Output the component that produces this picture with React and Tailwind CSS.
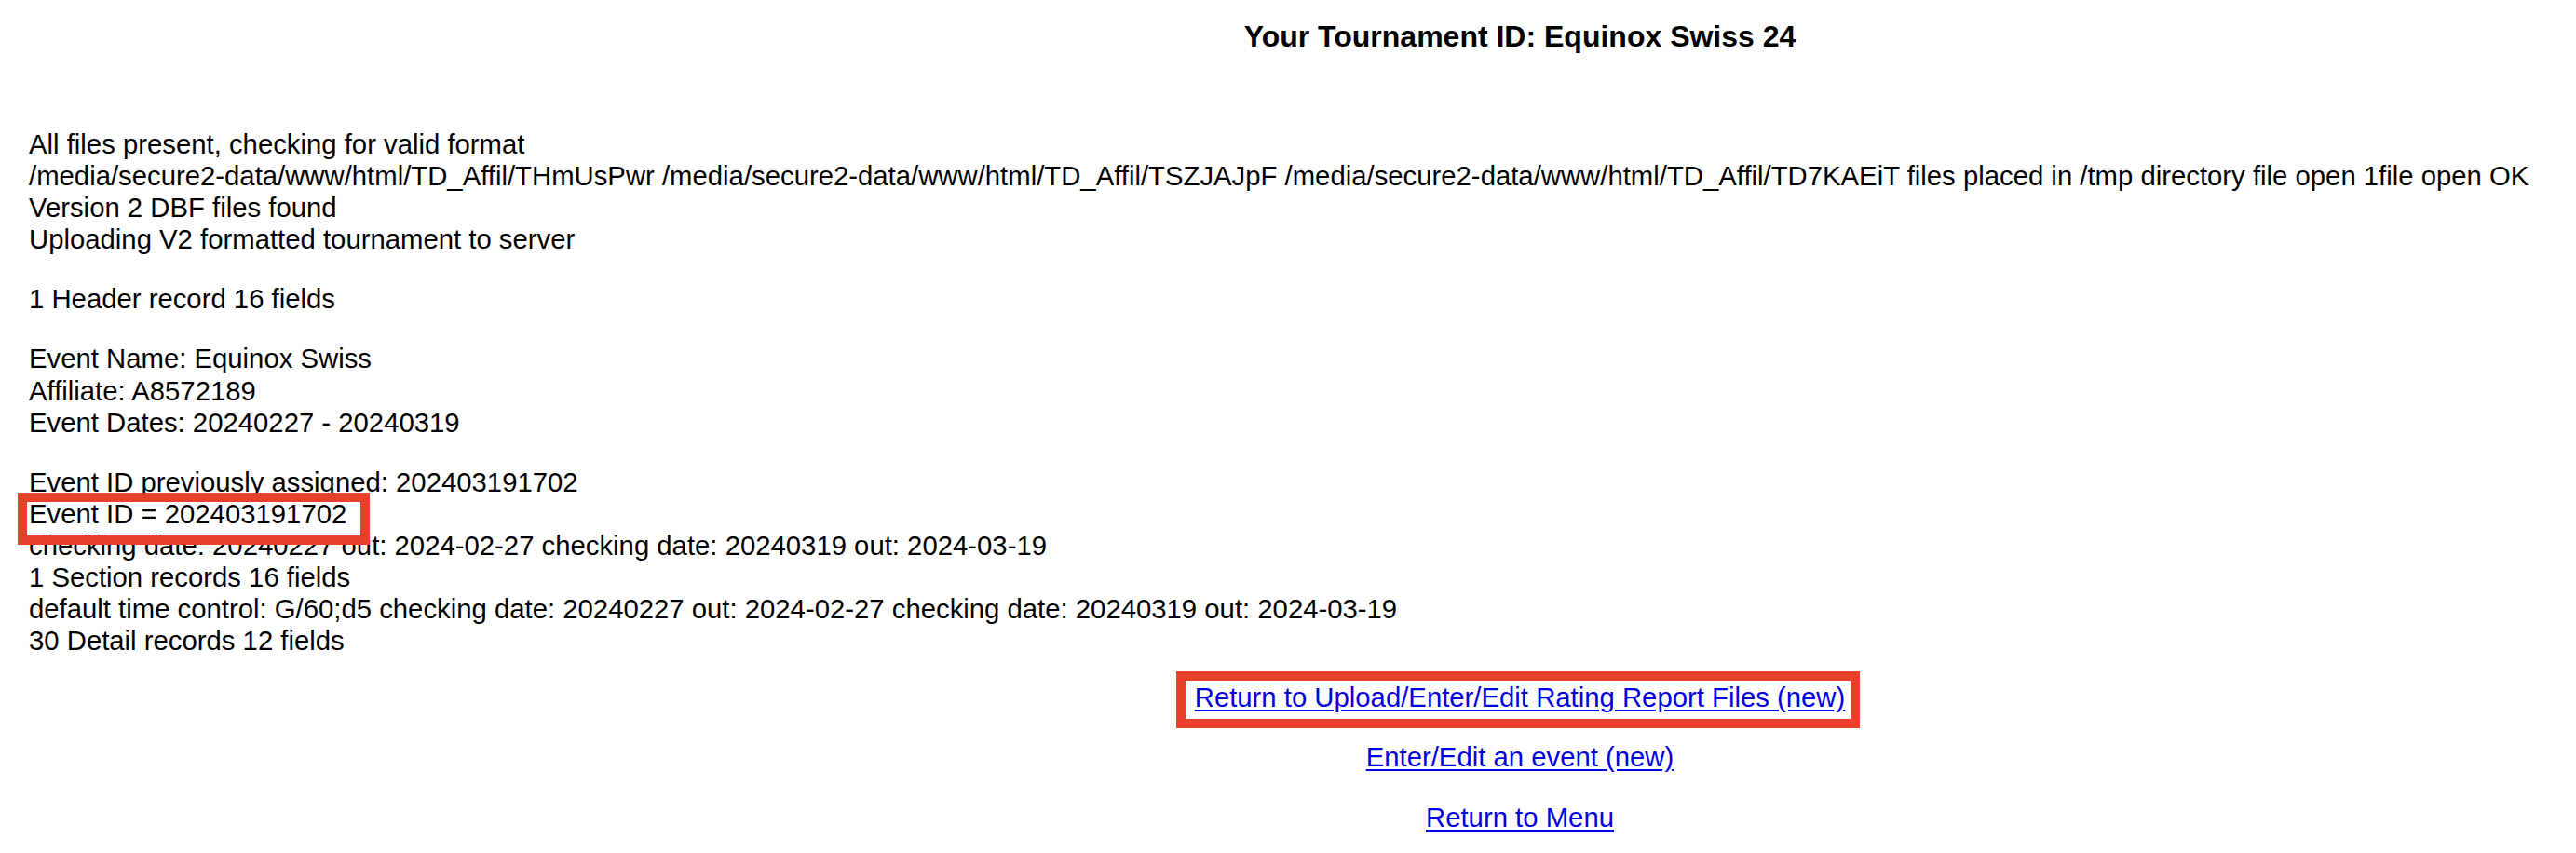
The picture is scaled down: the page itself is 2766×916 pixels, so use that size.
import React from 'react';

const lines = [
    'All files present, checking for valid format',
    '/media/secure2-data/www/html/TD_Affil/THmUsPwr /media/secure2-data/www/html/TD_Affil/TSZJAJpF /media/secure2-data/www/html/TD_Affil/TD7KAEiT files placed in /tmp directory file open 1file open OK',
    'Version 2 DBF files found',
    'Uploading V2 formatted tournament to server',
];

const links = [
    { label: 'Return to Upload/Enter/Edit Rating Report Files (new)', marked: true },
    { label: 'Enter/Edit an event (new)' },
    { label: 'Return to Menu' },
];

// red annotation frame drawn over the text
const Marker = ({ className }) => (
    <span className={`absolute border-[10px] border-[#e8412b] pointer-events-none ${className}`} />
);

const App = () => {
    return (
        <div className="min-h-screen bg-white text-black font-['Liberation_Sans',Arial,sans-serif] overflow-hidden">
            {/* Title */}
            <div className="ml-[498px] pt-[21px] text-center">
                <h1 className="text-[32px] leading-[36px] font-bold">Your Tournament ID: Equinox Swiss 24</h1>
            </div>

            {/* Upload log */}
            <div className="pl-[31px] pt-[81px] text-[29.3px] leading-[34.1px]">
                <div className="whitespace-nowrap">
                    {lines.map((l, i) => (
                        <div key={i}>{l}</div>
                    ))}
                </div>

                <p className="mt-[30px]">1 Header record 16 fields</p>

                <div className="mt-[30px]">
                    <div>Event Name: Equinox Swiss</div>
                    <div>Affiliate: A8572189</div>
                    <div>Event Dates: 20240227 - 20240319</div>
                </div>

                <div className="mt-[30px]">
                    <div>Event ID previously assigned: 202403191702</div>
                    <div>
                        <span className="relative inline-block">
                            Event ID = 202403191702
                            <Marker className="left-[-12px] top-[-6px] right-[-25px] bottom-[-16px]" />
                        </span>
                    </div>
                    <div>checking date: 20240227 out: 2024-02-27 checking date: 20240319 out: 2024-03-19</div>
                    <div>1 Section records 16 fields</div>
                    <div>default time control: G/60;d5 checking date: 20240227 out: 2024-02-27 checking date: 20240319 out: 2024-03-19</div>
                    <div>30 Detail records 12 fields</div>
                </div>

                {/* Navigation links */}
                <div className="ml-[467px] text-center">
                    {links.map((lnk, i) => (
                        <p key={i} className={i === 0 ? 'mt-[27px]' : 'mt-[30px]'}>
                            <span className="relative inline-block">
                                <a href="#" className="text-[#0000e0] underline underline-offset-[3px]">{lnk.label}</a>
                                {lnk.marked && <Marker className="left-[-20px] top-[-11px] right-[-16px] bottom-[-16px]" />}
                            </span>
                        </p>
                    ))}
                </div>
            </div>
        </div>
    );
};

export default App;
